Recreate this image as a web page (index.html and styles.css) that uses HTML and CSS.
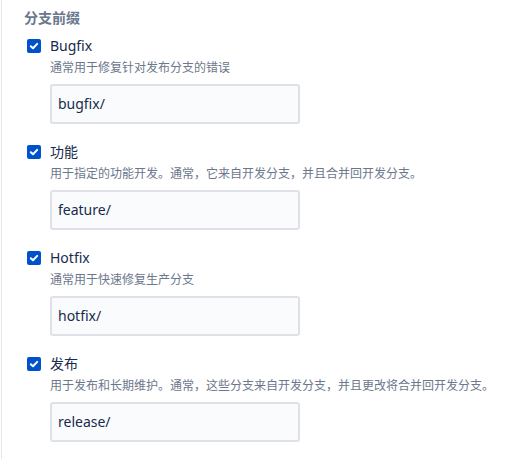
FILE: index.html
```html
<!DOCTYPE html>
<html lang="zh">
<head>
<meta charset="utf-8">
<link rel="stylesheet" href="styles.css">
</head>
<body>
<div class="panel">
  <h3 class="heading">分支前缀</h3>
  <div class="list">
    <div class="item">
      <label class="check-row">
        <span class="box"><svg viewBox="0 0 14 14" width="14" height="14"><path d="M3.8 7.2 L6 9.3 L10.2 4.9" fill="none" stroke="#fff" stroke-width="2" stroke-linecap="round" stroke-linejoin="round"/></svg></span>
        <span class="label">Bugfix</span>
      </label>
      <div class="desc">通常用于修复针对发布分支的错误</div>
      <div class="field">bugfix/</div>
    </div>
    <div class="item">
      <label class="check-row">
        <span class="box"><svg viewBox="0 0 14 14" width="14" height="14"><path d="M3.8 7.2 L6 9.3 L10.2 4.9" fill="none" stroke="#fff" stroke-width="2" stroke-linecap="round" stroke-linejoin="round"/></svg></span>
        <span class="label">功能</span>
      </label>
      <div class="desc">用于指定的功能开发。通常，它来自开发分支，并且合并回开发分支。</div>
      <div class="field">feature/</div>
    </div>
    <div class="item">
      <label class="check-row">
        <span class="box"><svg viewBox="0 0 14 14" width="14" height="14"><path d="M3.8 7.2 L6 9.3 L10.2 4.9" fill="none" stroke="#fff" stroke-width="2" stroke-linecap="round" stroke-linejoin="round"/></svg></span>
        <span class="label">Hotfix</span>
      </label>
      <div class="desc">通常用于快速修复生产分支</div>
      <div class="field">hotfix/</div>
    </div>
    <div class="item">
      <label class="check-row">
        <span class="box"><svg viewBox="0 0 14 14" width="14" height="14"><path d="M3.8 7.2 L6 9.3 L10.2 4.9" fill="none" stroke="#fff" stroke-width="2" stroke-linecap="round" stroke-linejoin="round"/></svg></span>
        <span class="label">发布</span>
      </label>
      <div class="desc">用于发布和长期维护。通常，这些分支来自开发分支，并且更改将合并回开发分支。</div>
      <div class="field">release/</div>
    </div>
  </div>
</div>
</body>
</html>
```
FILE: styles.css
```css
html, body {
  margin: 0;
  padding: 0;
  background: #fff;
}
body {
  font-family: "Noto Sans", "Noto Sans CJK SC", sans-serif;
  color: #172b4d;
  height: 459px;
  overflow: hidden;
}
.panel {
  margin-left: 1px;
  border-left: 1px solid #e6e6e6;
  padding: 8px 0 0 22px;
  height: 459px;
  box-sizing: border-box;
}
.heading {
  margin: 0;
  font-size: 14px;
  line-height: 20px;
  font-weight: 700;
  color: #6b778c;
}
.list {
  display: flex;
  flex-direction: column;
  gap: 18px;
  margin-top: 8px;
  padding-left: 3px;
}
.item {
  display: flex;
  flex-direction: column;
}
.check-row {
  display: flex;
  align-items: center;
  gap: 9px;
  height: 20px;
}
.box {
  width: 14px;
  height: 14px;
  border-radius: 2px;
  background: #0052cc;
  display: block;
}
.box svg { display: block; }
.label {
  font-size: 14px;
  line-height: 20px;
  color: #172b4d;
}
.desc {
  margin-top: 4px;
  margin-left: 23px;
  font-size: 12px;
  line-height: 16px;
  color: #6b778c;
}
.field {
  margin-top: 8px;
  margin-left: 23px;
  width: 250px;
  height: 40px;
  box-sizing: border-box;
  border: 2px solid #dfe1e6;
  border-radius: 3px;
  background: #fafbfc;
  padding: 0 6px;
  font-size: 14px;
  line-height: 36px;
  color: #172b4d;
}
```
